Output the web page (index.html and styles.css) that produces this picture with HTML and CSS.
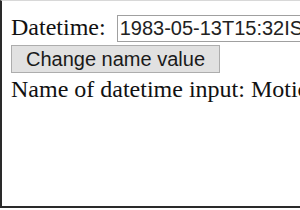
FILE: index.html
```html
<!DOCTYPE html>
<html>
<head>
<meta charset="utf-8">
<link rel="stylesheet" href="styles.css">
</head>
<body>
<div class="frame">
  <div class="row-field">
    <label class="label" for="dt">Datetime:</label>
    <input class="dt-input" id="dt" type="text" name="Motion" value="1983-05-13T15:32IST">
  </div>
  <div class="row-button">
    <button class="btn" type="button">Change name value</button>
  </div>
  <p class="result">Name of datetime input: Motion</p>
</div>
</body>
</html>
```
FILE: styles.css
```css
html, body {
  margin: 0;
  padding: 0;
  background: #fff;
  overflow: hidden;
}

.frame {
  box-sizing: border-box;
  width: 330px;
  height: 208px;
  border-top: 1px solid #d8d8d8;
  border-left: 2px solid #2a2a2a;
  border-bottom: 2px solid #2a2a2a;
  padding: 0 0 0 9px;
  overflow: hidden;
  font-family: "Liberation Serif", "Times New Roman", serif;
  color: #111;
}

.row-field {
  display: flex;
  align-items: baseline;
  gap: 11px;
  margin-top: 13px;
  white-space: nowrap;
}

.label {
  font-size: 24px;
  line-height: 27px;
}

.dt-input {
  flex: none;
  width: 220px;
  box-sizing: border-box;
  height: 27px;
  margin: 0;
  padding: 1px 2px;
  border: 1px solid #a0a0a0;
  font-family: "Liberation Sans", Arial, sans-serif;
  font-size: 20px;
  line-height: 23px;
  color: #222;
  background: #fff;
  outline: none;
}

.row-button {
  margin-top: 3px;
  display: flex;
}

.btn {
  box-sizing: border-box;
  height: 28px;
  margin: 0;
  padding: 2px 14px;
  border: 1px solid #adadad;
  border-radius: 0;
  background: #e1e1e1;
  font-family: "Liberation Sans", Arial, sans-serif;
  font-size: 20px;
  line-height: 22px;
  color: #1a1a1a;
}

.result {
  margin: 3px 0 0;
  font-size: 24px;
  line-height: 27px;
  white-space: nowrap;
}
```
